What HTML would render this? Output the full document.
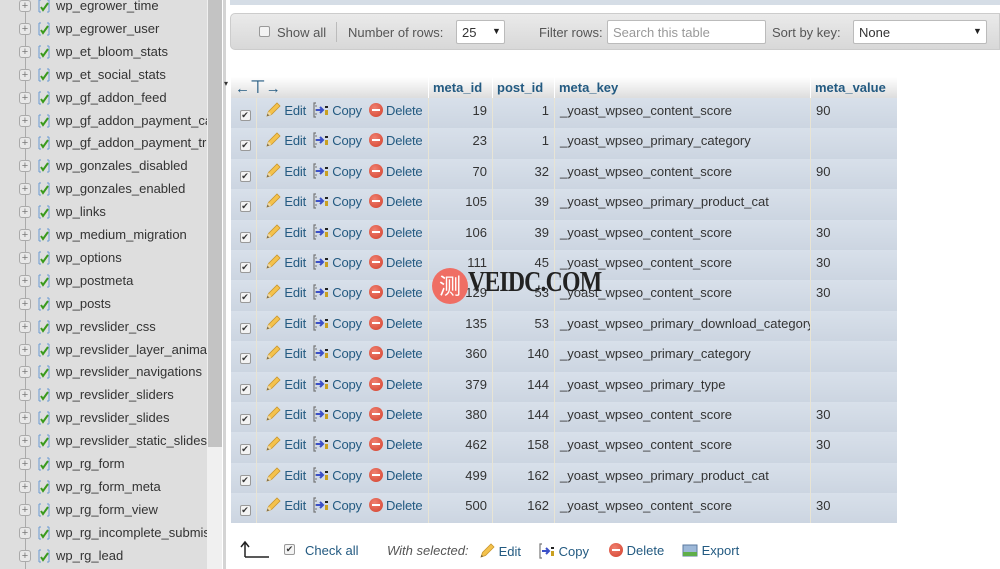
<!DOCTYPE html>
<html><head><meta charset="utf-8"><style>
*{margin:0;padding:0;box-sizing:border-box}
body{width:1000px;height:569px;overflow:hidden;background:#fff;font-family:"Liberation Sans",Arial,sans-serif;font-size:13px;color:#333;position:relative}
#side{position:absolute;left:0;top:0;width:207px;height:569px;background:#dedede;overflow:hidden}
.it{position:absolute;left:0;height:22px;width:207px;white-space:nowrap}
.it .pl{position:absolute;left:19px;top:4px;width:12px;height:12px;border:1px solid #aaa;border-radius:3px;background:#e8e8e8;font-size:11px;line-height:10px;text-align:center;color:#777}
.it .ic{position:absolute;left:37px;top:3px;width:14px;height:14px}
.it .tx{position:absolute;left:56px;top:2px;font-size:13px;color:#333}
.vline{position:absolute;left:25px;top:0;width:1px;height:569px;background:#aaa}
#sbt{position:absolute;left:207px;top:0;width:15px;height:569px;background:#f0f0f0}
#sbth{position:absolute;left:208px;top:0;width:14px;height:447px;background:#c3c3c3}
#sep{position:absolute;left:223px;top:0;width:3px;height:569px;background:#d4d4d4}
#topstrip{position:absolute;left:230px;top:0;width:770px;height:5px;background:#d5dde6}
#tb{position:absolute;left:230px;top:13px;width:770px;height:37px;border-radius:5px 0 0 5px;background:linear-gradient(#eaeaea,#d8d8d8);border:1px solid #ccc}
#tb span{position:absolute;top:11px;color:#555;font-size:13px}
.inp{position:absolute;background:#fff;border:1px solid #bbb;border-radius:2px;height:24px;top:6px;font-size:13px;padding:4px 5px;color:#333}
.cb{position:absolute;width:11px;height:11px;border:1px solid #999;border-radius:2px;background:#f3f3f3}
table{position:absolute;left:230px;top:77px;border-collapse:collapse;table-layout:fixed;width:666px}
th{height:21px;background:linear-gradient(#fff,#ddd);color:#235a81;font-weight:bold;text-align:left;padding:0 4px;font-size:13px;border-left:1px solid #fff}
td{height:30.4px;background:linear-gradient(#d8e0ea,#ccd5e1);border-left:1px solid #e8e4d4;padding:5px 5px 0;vertical-align:top;font-size:13px;color:#333;white-space:nowrap;overflow:hidden}
td.n{text-align:right}
td.a{color:#235a81;padding:4px 0 0 8px;letter-spacing:-.2px}
.ck{display:inline-block;width:11px;height:11px;border:1px solid #999;border-radius:2px;background:#f3f3f3;font-size:9px;line-height:9px;text-align:center;color:#333}
.pen{width:16px;height:16px;vertical-align:-3px}
.cp{width:16px;height:16px;vertical-align:-3px}
.del{display:inline-block;width:14px;height:14px;border-radius:50%;background:radial-gradient(circle at 40% 35%,#f08070,#d2402c);position:relative;vertical-align:-2px}
.del:after{content:"";position:absolute;left:3px;top:6px;width:8px;height:2px;background:#fff}
#foot{position:absolute;top:540px;left:240px;font-size:13px;color:#235a81}
#foot span{position:absolute;top:3px;white-space:nowrap}
#wm{position:absolute;left:432px;top:268px;width:36px;height:36px;border-radius:50%;background:#ef6e64;color:#fff;font-family:"Noto Sans CJK SC",sans-serif;font-size:22px;line-height:34px;text-align:center;z-index:5}
#wmt{position:absolute;left:468px;top:266px;font-family:"Liberation Serif",serif;font-weight:bold;font-size:29px;color:#222;letter-spacing:-1px;transform:scaleX(.82);transform-origin:left;z-index:5}
</style></head><body>
<div id="side"></div>
<script>
var names=["wp_egrower_time","wp_egrower_user","wp_et_bloom_stats","wp_et_social_stats","wp_gf_addon_feed","wp_gf_addon_payment_ca","wp_gf_addon_payment_tra","wp_gonzales_disabled","wp_gonzales_enabled","wp_links","wp_medium_migration","wp_options","wp_postmeta","wp_posts","wp_revslider_css","wp_revslider_layer_animat","wp_revslider_navigations","wp_revslider_sliders","wp_revslider_slides","wp_revslider_static_slides","wp_rg_form","wp_rg_form_meta","wp_rg_form_view","wp_rg_incomplete_submis","wp_rg_lead"];
var s=document.getElementById('side');var h='<div class="vline"></div>';
names.forEach(function(n,i){h+='<div class="it" style="top:'+(-4+i*22.9)+'px"><div class="pl">+</div><svg class="ic" viewBox="0 0 14 14"><path d="M2 1v12M2 1h2M2 13h2M12 1v12M12 1h-2M12 13h-2" stroke="#6b9bd1" fill="none"/><path d="M4 8l2 3 5-7" stroke="#3a9a1c" stroke-width="2" fill="none"/></svg><div class="tx">'+n+'</div></div>';});
s.innerHTML=h;
</script>
<div id="sbt"></div><div id="sbth"></div><div id="sep"></div>
<div id="topstrip"></div>
<div id="tb">
<div class="cb" style="left:28px;top:12px"></div><span style="left:46px">Show all</span>
<div style="position:absolute;left:105px;top:8px;width:1px;height:20px;background:#bbb"></div>
<span style="left:117px">Number of rows:</span>
<div class="inp" style="left:225px;width:49px">25<span style="left:35px;top:5px;font-size:9px;color:#222">▼</span></div>
<span style="left:308px">Filter rows:</span>
<div class="inp" style="left:376px;width:159px;color:#999">Search this table</div>
<span style="left:541px">Sort by key:</span>
<div class="inp" style="left:622px;width:134px">None<span style="left:119px;top:5px;font-size:9px;color:#222">▼</span></div>
</div>
<div style="position:absolute;left:224px;top:79px;font-size:8px;color:#333">▾</div>
<table id="t">
<colgroup><col style="width:26px"><col style="width:172px"><col style="width:64px"><col style="width:62px"><col style="width:256px"><col style="width:86px"></colgroup>
<tr><th colspan="2" style="padding-left:4px;font-weight:normal;color:#235a81;font-size:15px">←<span style="font-size:18px">⊤</span>→</th><th>meta_id</th><th>post_id</th><th>meta_key</th><th>meta_value</th></tr>
</table>
<script>
var rows=[[19,1,"_yoast_wpseo_content_score","90"],[23,1,"_yoast_wpseo_primary_category",""],[70,32,"_yoast_wpseo_content_score","90"],[105,39,"_yoast_wpseo_primary_product_cat",""],[106,39,"_yoast_wpseo_content_score","30"],[111,45,"_yoast_wpseo_content_score","30"],[129,53,"_yoast_wpseo_content_score","30"],[135,53,"_yoast_wpseo_primary_download_category",""],[360,140,"_yoast_wpseo_primary_category",""],[379,144,"_yoast_wpseo_primary_type",""],[380,144,"_yoast_wpseo_content_score","30"],[462,158,"_yoast_wpseo_content_score","30"],[499,162,"_yoast_wpseo_primary_product_cat",""],[500,162,"_yoast_wpseo_content_score","30"]];
var pen='<svg class="pen" viewBox="0 0 16 16"><path d="M2 14l1.5-4.5L12 1l3 3-8.5 8.5z" fill="#f4c24c" stroke="#c9962e" stroke-width=".8"/><path d="M2 14l1.5-4.5 3 3z" fill="#f0d9a0"/><path d="M2 14l.7-2 1.3 1.3z" fill="#444"/></svg>';
var cp='<svg class="cp" viewBox="0 0 16 16"><path d="M3 1H1v14h2" stroke="#777" stroke-width="1.2" fill="none"/><path d="M2 4h2M2 8h2M2 12h2" stroke="#777"/><path d="M3 8h7M7 5l3 3-3 3" stroke="#3b50c8" stroke-width="2" fill="none"/><rect x="12" y="4" width="3" height="2" fill="#222"/><rect x="12" y="8" width="3" height="5" fill="#c9a020"/></svg>';
var t=document.getElementById('t');var h='';
rows.forEach(function(r){h+='<tr><td style="padding:8px 0 0 9px;border-left:none"><span class="ck">✔</span></td><td class="a">'+pen+' Edit&nbsp; '+cp+' Copy&nbsp; <i class="del"></i> Delete</td><td class="n">'+r[0]+'</td><td class="n">'+r[1]+'</td><td>'+r[2]+'</td><td>'+r[3]+'</td></tr>';});
t.innerHTML+=h;
</script>
<span id="wm">测</span><span id="wmt">VEIDC.COM</span>
<div id="foot">
<svg style="position:absolute;left:0;top:0" width="30" height="20" viewBox="0 0 30 20"><path d="M5 17V3M1 7l4-5 4 5M5 17h24" stroke="#222" stroke-width="1.5" fill="none"/></svg>
<span class="ck" style="position:absolute;left:44px;top:4px">✔</span>
<span style="left:65px">Check all</span>
<span style="left:147px;font-style:italic;color:#555">With selected:</span>
<span style="left:239px"><svg class="pen" viewBox="0 0 16 16"><path d="M2 14l1.5-4.5L12 1l3 3-8.5 8.5z" fill="#f4c24c" stroke="#c9962e" stroke-width=".8"/><path d="M2 14l.7-2 1.3 1.3z" fill="#444"/></svg> Edit</span>
<span style="left:299px"><svg class="cp" viewBox="0 0 16 16"><path d="M3 1H1v14h2" stroke="#777" stroke-width="1.2" fill="none"/><path d="M3 8h7M7 5l3 3-3 3" stroke="#3b50c8" stroke-width="2" fill="none"/><rect x="12" y="4" width="3" height="2" fill="#222"/><rect x="12" y="8" width="3" height="5" fill="#c9a020"/></svg> Copy</span>
<span style="left:369px"><i class="del"></i> Delete</span>
<span style="left:442px"><svg width="16" height="13" viewBox="0 0 16 13" style="vertical-align:-2px"><rect x="1" y="1" width="14" height="11" fill="#9db8d8" stroke="#5a7aa0"/><rect x="1" y="8" width="14" height="4" fill="#5fae4a"/></svg> Export</span>
</div>
</body></html>
